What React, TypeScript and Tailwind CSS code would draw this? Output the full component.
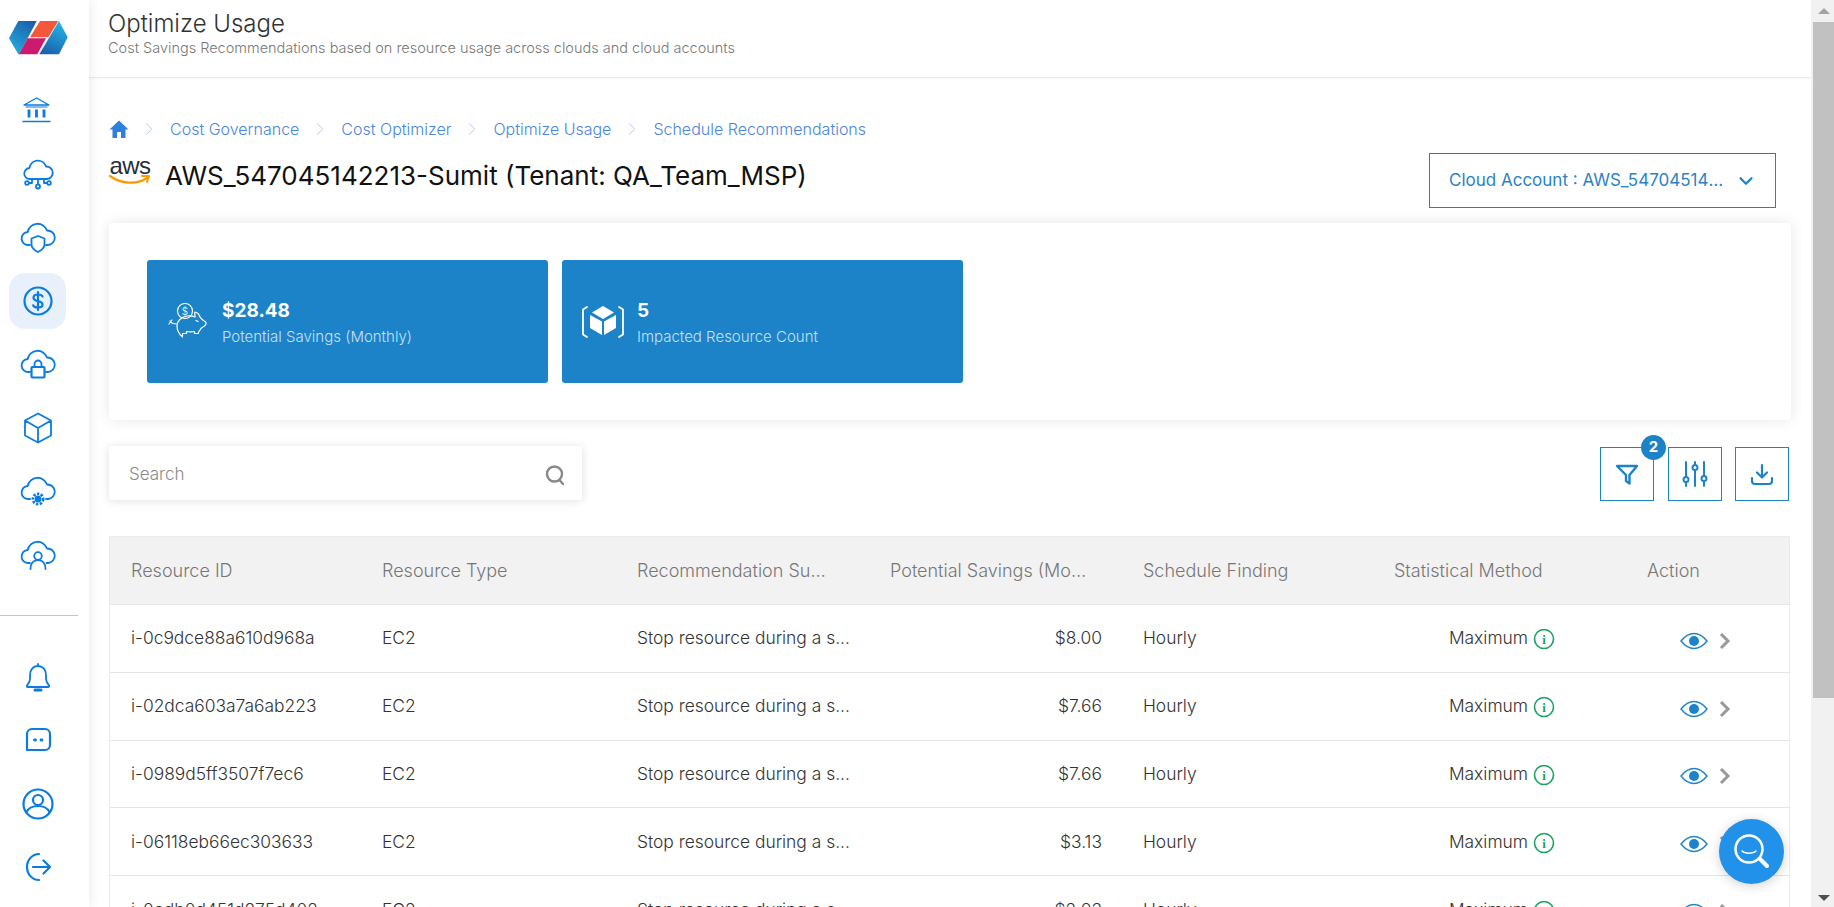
import { ChevronDown, ChevronRight } from "lucide-react";

const rows = [
  { id: "i-0c9dce88a610d968a", savings: "$8.00" },
  { id: "i-02dca603a7a6ab223", savings: "$7.66" },
  { id: "i-0989d5ff3507f7ec6", savings: "$7.66" },
  { id: "i-06118eb66ec303633", savings: "$3.13" },
  { id: "i-0edb0d451d875d402", savings: "$2.93" },
];

const gridCols = "grid grid-cols-[254px_254px_253px_253px_252px_253px_1fr]";

function NavIcon({ children, active }: { children: React.ReactNode; active?: boolean }) {
  return (
    <div className={`w-[57px] h-[56px] flex items-center justify-center rounded-[16px] ${active ? "bg-[#e8f0fc]" : ""}`}>
      <svg width="36" height="36" viewBox="0 0 36 36" fill="none" stroke="#0a7be0" strokeWidth="1.8" strokeLinecap="round" strokeLinejoin="round">
        {children}
      </svg>
    </div>
  );
}

const cloud = "M10 26H8.500a6.500 6.500 0 0 1-.8-13A10 10 0 0 1 27 11.500 7 7 0 0 1 28 26h-2";

function Logo() {
  return (
    <svg width="60" height="36" viewBox="0 0 60 36">
      <defs>
        <linearGradient id="lg1" x1="0.700" y1="0" x2="0.200" y2="1">
          <stop offset="0" stopColor="#1a62ad" />
          <stop offset="1" stopColor="#25addf" />
        </linearGradient>
        <linearGradient id="lg2" x1="0.700" y1="0" x2="0.300" y2="1">
          <stop offset="0" stopColor="#25b6e4" />
          <stop offset="1" stopColor="#1a62ad" />
        </linearGradient>
      </defs>
      <path d="M1 18.300L10.300 1H28.700L11.300 34.300H10.300Z" fill="url(#lg1)" />
      <path d="M32 1H50.300L40.300 17.300H22Z" fill="#f4583c" />
      <path d="M19.700 18.300H38L29.300 34.300H11Z" fill="#cc1a6e" />
      <path d="M51 1L59.700 17.300L51 34.300H31.300Z" fill="url(#lg2)" />
    </svg>
  );
}

function PiggyIcon() {
  return (
    <svg width="42" height="42" viewBox="0 0 42 42" fill="none" stroke="#fff" strokeWidth="1.200" strokeLinecap="round" strokeLinejoin="round">
      <circle cx="19" cy="10" r="7.500" />
      <text x="19" y="13.500" fontSize="10" fill="#fff" stroke="none" textAnchor="middle" fontFamily="Inter, sans-serif">$</text>
      <path d="M11 25c0-5 4-9 10-10 3-.5 6 0 8 1 .5-1-1-4 0-5 2 .5 4 2 4.500 4 .5 2 2 3 4 4.500 2 1 3 2 2.500 3.500-.5 2-3 3-4.500 4-1 1-2 3-3 4v1.500h-4v-2c-3 .5-5 .5-8 0v2h-4V36c-3-2.500-5.500-6-5.500-11z" />
      <path d="M11 23c-3 0-6-1-7-3M3 23l3-4" />
      <path d="M30 19.500l2 1" />
    </svg>
  );
}

function CubeIcon() {
  return (
    <svg width="42" height="42" viewBox="0 0 42 42" className="translate-x-[1px]">
      <path d="M21 5L32 11.500L21 18L10 11.500Z" fill="#fff" />
      <path d="M8 14L20 20.500V34L8 27Z" fill="#fff" />
      <path d="M34 14L22 20.500V34L34 27Z" fill="#fff" />
      <path d="M5 6L1 8.500V33.500L5 36M37 6L41 8.500V33.500L37 36" fill="none" stroke="#fff" strokeWidth="1.800" strokeLinecap="round" strokeLinejoin="round" />
    </svg>
  );
}

function AwsLogo() {
  return (
    <div className="w-[42px] flex flex-col items-center leading-none">
      <span className="text-[24px] font-normal text-[#232f3e] leading-[17px] tracking-tight font-['Liberation_Sans',sans-serif]">aws</span>
      <svg width="42" height="12" viewBox="0 0 42 12" fill="none">
        <path d="M1 2c11 8 26 9 37 2" stroke="#f90" strokeWidth="2.200" strokeLinecap="round" />
        <path d="M33 2h7l-2 6" stroke="#f90" strokeWidth="2" strokeLinecap="round" strokeLinejoin="round" />
      </svg>
    </div>
  );
}

function Crumb({ children }: { children: string }) {
  return (
    <>
      <ChevronRight size={22} strokeWidth={1} className="text-[#a9c6ef] mx-[10px]" />
      <span className="text-[#4a86dc] text-[16px]">{children}</span>
    </>
  );
}

function Tile({ icon, value, label }: { icon: React.ReactNode; value: string; label: string }) {
  return (
    <div className="w-[401px] h-[123px] bg-[#1d83c8] rounded-[3px] flex items-center pl-[19px] pb-[5px]">
      <div className="w-[42px] h-[42px] mt-[6px] shrink-0">{icon}</div>
      <div className="ml-[14px]">
        <div className="text-white text-[19px] font-bold leading-[26px] mt-[6px]">{value}</div>
        <div className="text-[#c5e0f3] text-[15px] leading-[20px] mt-[3px]">{label}</div>
      </div>
    </div>
  );
}

function IconButton({ children }: { children: React.ReactNode }) {
  return <div className="w-[54px] h-[54px] border border-[#1d83c8] flex items-center justify-center text-[#1d83c8] relative">{children}</div>;
}

function InfoIcon() {
  return (
    <svg width="22" height="22" viewBox="0 0 22 22" fill="none" className="ml-[5px] mt-[2px]">
      <circle cx="11" cy="11" r="9.500" stroke="#1aa260" strokeWidth="1.600" />
      <text x="11" y="16" fontSize="13" fontWeight="700" fill="#1aa260" textAnchor="middle" fontFamily="Liberation Serif, serif">i</text>
    </svg>
  );
}

function EyeIcon() {
  return (
    <svg width="28" height="18" viewBox="0 0 28 18" fill="none">
      <path d="M1 9C5 4 9 1.500 14 1.500S23 4 27 9C23 14 19 16.500 14 16.500S5 14 1 9Z" stroke="#1d83c8" strokeWidth="1.400" />
      <ellipse cx="14" cy="9" rx="5" ry="5" fill="#1d83c8" />
    </svg>
  );
}

export default function App() {
  return (
    <div className="h-[907px] w-[1834px] overflow-hidden flex bg-white font-['Inter',sans-serif] font-light relative">
      {/* Sidebar */}
      <aside className="w-[89px] shrink-0 h-full bg-white z-10 shadow-[2px_0_10px_rgba(0,0,0,0.08)] flex flex-col">
        <div className="pt-[20px] pl-[8px] h-[78px]"><Logo /></div>
        <div className="flex flex-col items-start pl-[9px] gap-[7.500px] mt-[4px]">
          <NavIcon>
            <path d="M4 13L16.500 6 29 13z" strokeWidth="1.400" />
            <path d="M6 15h21" strokeWidth="1.200" />
            <path d="M3 29.500h27" strokeWidth="1.400" />
            <path d="M9 17.500v8M16.500 17.500v8M24 17.500v8" strokeWidth="2.800" strokeLinecap="butt" />
          </NavIcon>
          <NavIcon>
            <path d="M12 23H10a5.500 5.500 0 0 1-.5-11 8.500 8.500 0 0 1 16.500-1.500A6 6 0 0 1 27 23h-3z" />
            <path d="M18 23v5M12 23v4H9M24 23v4h3" />
            <circle cx="7" cy="27" r="1.800" /><circle cx="29" cy="27" r="1.800" /><circle cx="18" cy="30.500" r="2" />
          </NavIcon>
          <NavIcon>
            <path d={cloud} />
            <path d="M18 17l6.500 2.500v6c0 3.500-2.500 5.500-6.500 7.500-4-2-6.500-4-6.500-7.500v-6z" />
          </NavIcon>
          <NavIcon active>
            <circle cx="18" cy="18" r="13.500" strokeWidth="2.200" />
            <path d="M22.500 13.500C22 12 20 11.500 18 11.500c-2.500 0-4.500 1-4.500 3.200 0 4.800 9 2 9 6.800 0 2.200-2 3-4.500 3-2.200 0-4.200-.5-4.800-2.200M18 9v18" strokeWidth="2.200" />
          </NavIcon>
          <NavIcon>
            <path d={cloud} />
            <rect x="11.500" y="21" width="13" height="10.500" rx="1" strokeWidth="2.200" fill="#fff" />
            <path d="M14.500 21v-3a3.500 3.500 0 0 1 7 0v3" />
          </NavIcon>
          <NavIcon>
            <path d="M18 3.500l13 7v15l-13 7-13-7v-15zM5 10.500L18 18l13-7.500M18 18v14.500" />
          </NavIcon>
          <NavIcon>
            <path d={cloud} />
            <circle cx="18" cy="26" r="2.500" fill="#0a7be0" />
            <circle cx="18" cy="26" r="5.200" strokeDasharray="2.400 1.400" strokeWidth="2.600" strokeLinecap="butt" />
          </NavIcon>
          <NavIcon>
            <path d="M10 26H8.500a6.500 6.500 0 0 1-.8-13A10 10 0 0 1 27 11.500 7 7 0 0 1 28 26h-1.500" />
            <circle cx="18" cy="19" r="3.800" />
            <path d="M10.500 32c0-5.500 3-9 7.500-9s7.500 3.500 7.500 9" />
          </NavIcon>
        </div>
        <div className="h-px w-[78px] bg-[#c4c4c4] mt-[32px]" />
        <div className="flex flex-col items-start pl-[9px] gap-[7.500px] mt-[33px]">
          <NavIcon>
            <path d="M18 5v2M18 7c-5 0-8 4-8 9v4c0 3-2 5-3 6.500-.5 1 0 1.500 1 1.500h20c1 0 1.500-.5 1-1.500-1-1.500-3-3.500-3-6.500v-4c0-5-3-9-8-9z" />
            <path d="M15 31h6" strokeWidth="3" />
          </NavIcon>
          <NavIcon>
            <path d="M14 7h11a5 5 0 0 1 5 5v11a5 5 0 0 1-5 5H7v-16a5 5 0 0 1 5-5z" strokeWidth="2.200" />
            <path d="M14.500 18h1M21 18h1" strokeWidth="2.800" />
          </NavIcon>
          <NavIcon>
            <circle cx="18" cy="18" r="14.500" strokeWidth="2.200" />
            <circle cx="18" cy="14" r="5" strokeWidth="2.200" />
            <path d="M6.500 26c2-4 6-6 11.500-6s9.500 2 11.500 6" strokeWidth="2.200" />
          </NavIcon>
          <NavIcon>
            <path d="M19 5C12 5 7 11 7 18s5 13 12 13" strokeWidth="2.200" />
            <path d="M13 18h17M23.500 11.500L30 18l-6.500 6.500" strokeWidth="2.200" />
          </NavIcon>
        </div>
      </aside>

      {/* Main */}
      <main className="flex-1 min-w-0 h-full overflow-hidden flex flex-col">
        <header className="h-[78px] shrink-0 border-b border-[#ececec] shadow-[0_1px_3px_rgba(0,0,0,0.04)] pl-[19px] pt-[10px]">
          <h1 className="text-[24px] leading-[28px] text-[#333]">Optimize Usage</h1>
          <p className="text-[14.500px] leading-[20px] text-[#777]">Cost Savings Recommendations based on resource usage across clouds and cloud accounts</p>
        </header>

        <div className="pl-[20px] pr-[20px]">
          <nav className="flex items-center h-[24px] mt-[39px]">
            <svg width="20" height="20" viewBox="0 0 20 20" fill="#2f7fde" className="-mr-[1px]"><path d="M10 1.500L0.500 10.500H3.500V19H8V13H12V19H16.500V10.500H19.500Z" /></svg>
            <Crumb>Cost Governance</Crumb>
            <Crumb>Cost Optimizer</Crumb>
            <Crumb>Optimize Usage</Crumb>
            <Crumb>Schedule Recommendations</Crumb>
          </nav>

          <div className="flex justify-between items-start mt-[11px] pr-[15px]">
            <div className="flex items-start mt-[5px]">
              <AwsLogo />
              <h2 className="text-[26px] leading-[32px] text-[#111] font-normal ml-[14px] mt-[3px]">AWS_547045142213-Sumit (Tenant: QA_Team_MSP)</h2>
            </div>
            <div className="w-[347px] h-[55px] border border-[#1d83c8] flex items-center justify-between pl-[19px] pr-[18px] mt-[1px]">
              <span className="text-[#2b83c6] text-[17px] font-normal truncate w-[278px] pt-[1px]">Cloud Account : AWS_547045142213-Sumit</span>
              <ChevronDown size={22} strokeWidth={2.5} className="text-[#1d83c8]" />
            </div>
          </div>

          <section className="h-[197px] mt-[15px] rounded-[3px] bg-white shadow-[0_0_14px_rgba(0,0,0,0.1)] flex gap-[14px] pl-[38px] pt-[37px]">
            <Tile icon={<PiggyIcon />} value="$28.48" label="Potential Savings (Monthly)" />
            <Tile icon={<CubeIcon />} value="5" label="Impacted Resource Count" />
          </section>

          <div className="flex justify-between items-start mt-[26px] pr-[2px]">
            <div className="w-[473px] h-[54px] bg-white rounded-[3px] shadow-[0_1px_10px_rgba(0,0,0,0.13)] flex items-center justify-between pl-[20px] pr-[16px]">
              <span className="text-[#8a8a8a] text-[17px] pt-[3px]">Search</span>
              <svg width="22" height="22" viewBox="0 0 22 22" fill="none" stroke="#888" strokeWidth="2.400" strokeLinecap="round" className="mt-[3px]">
                <circle cx="10.500" cy="10" r="7.500" />
                <path d="M15.500 16l3.500 4" />
              </svg>
            </div>
            <div className="flex gap-[13px] mt-[1px]">
              <div className="mr-px">
                <IconButton>
                  <svg width="26" height="26" viewBox="0 0 26 26" fill="none" stroke="currentColor" strokeWidth="2.400" strokeLinejoin="round" strokeLinecap="round">
                    <path d="M3 5H23L15.500 14V22.500L12 20V14Z" />
                  </svg>
                  <span className="absolute -top-[13px] -right-[13px] w-[25px] h-[25px] rounded-full bg-[#1d83c8] text-white text-[15px] font-bold flex items-center justify-center">2</span>
                </IconButton>
              </div>
              <IconButton>
                <svg width="26" height="28" viewBox="0 0 26 28" fill="none" stroke="currentColor" strokeWidth="2" strokeLinecap="round">
                  <path d="M4 2v15M4 22v4M13 2v3M13 10v16M22 2v14M22 21v5" />
                  <circle cx="4" cy="19.500" r="2.500" />
                  <circle cx="13" cy="7.500" r="2.500" />
                  <circle cx="22" cy="18.500" r="2.500" />
                </svg>
              </IconButton>
              <IconButton>
                <svg width="24" height="24" viewBox="0 0 24 24" fill="none" stroke="currentColor" strokeWidth="2.200" strokeLinecap="round" strokeLinejoin="round">
                  <path d="M12 3v12M7 10.500l5 5 5-5" />
                  <path d="M2 16v3a3 3 0 0 0 3 3h14a3 3 0 0 0 3-3v-3" />
                </svg>
              </IconButton>
            </div>
          </div>

          <div className="mt-[35px] mr-px border border-[#ececec] text-[17.400px]">
            <div className={`${gridCols} h-[67px] items-center bg-[#f2f2f2] text-[#777] text-[18px]`}>
              <div className="pl-[21px]">Resource ID</div>
              <div className="pl-[18px]">Resource Type</div>
              <div className="pl-[19px] truncate pr-[36px]">Recommendation Summary</div>
              <div className="pl-[19px] truncate pr-[28px]">Potential Savings (Monthly)</div>
              <div className="pl-[19px]">Schedule Finding</div>
              <div className="pl-[18px]">Statistical Method</div>
              <div className="pl-[18px]">Action</div>
            </div>
            {rows.map((r) => (
              <div key={r.id} className={`${gridCols} h-[67.800px] items-center border-t border-[#e4e4e4] text-[#333]`}>
                <div className="pl-[21px]">{r.id}</div>
                <div className="pl-[18px]">EC2</div>
                <div className="pl-[19px]">Stop resource during a s...</div>
                <div className="text-right pr-[22px]">{r.savings}</div>
                <div className="pl-[19px]">Hourly</div>
                <div className="flex justify-end items-center pr-[74px]">Maximum<InfoIcon /></div>
                <div className="flex items-center pl-[51px] pt-[5px]">
                  <EyeIcon />
                  <svg width="12" height="18" viewBox="0 0 12 18" fill="none" stroke="#999" strokeWidth="3" className="ml-[11px]">
                    <path d="M2 2l7 7-7 7" />
                  </svg>
                </div>
              </div>
            ))}
          </div>
        </div>
      </main>

      {/* Scrollbar */}
      <div className="w-[23px] shrink-0 h-full bg-[#f1f1f1] pl-[2px] flex flex-col">
        <div className="h-[22px] flex items-center justify-center">
          <div className="w-0 h-0 border-l-[6px] border-r-[6px] border-b-[6px] border-l-transparent border-r-transparent border-b-[#a3a3a3]" />
        </div>
        <div className="w-full h-[676px] bg-[#c1c1c1]" />
        <div className="flex-1 flex items-end justify-center pb-[6px]">
          <div className="w-0 h-0 border-l-[6px] border-r-[6px] border-t-[6px] border-l-transparent border-r-transparent border-t-[#505050]" />
        </div>
      </div>

      {/* Floating search */}
      <div className="absolute left-[1719px] top-[819px] w-[65px] h-[65px] rounded-full bg-[#2291ea] shadow-[0_2px_12px_rgba(0,0,0,0.18)] flex items-center justify-center z-20">
        <svg width="42" height="42" viewBox="0 0 42 42" fill="none" stroke="#fff" strokeLinecap="round">
          <circle cx="18" cy="18" r="13.500" strokeWidth="2.500" />
          <path d="M11 20c3 3 11 3 14 0" strokeWidth="1.500" />
          <path d="M29 28l7 7" strokeWidth="4" />
        </svg>
      </div>
    </div>
  );
}
